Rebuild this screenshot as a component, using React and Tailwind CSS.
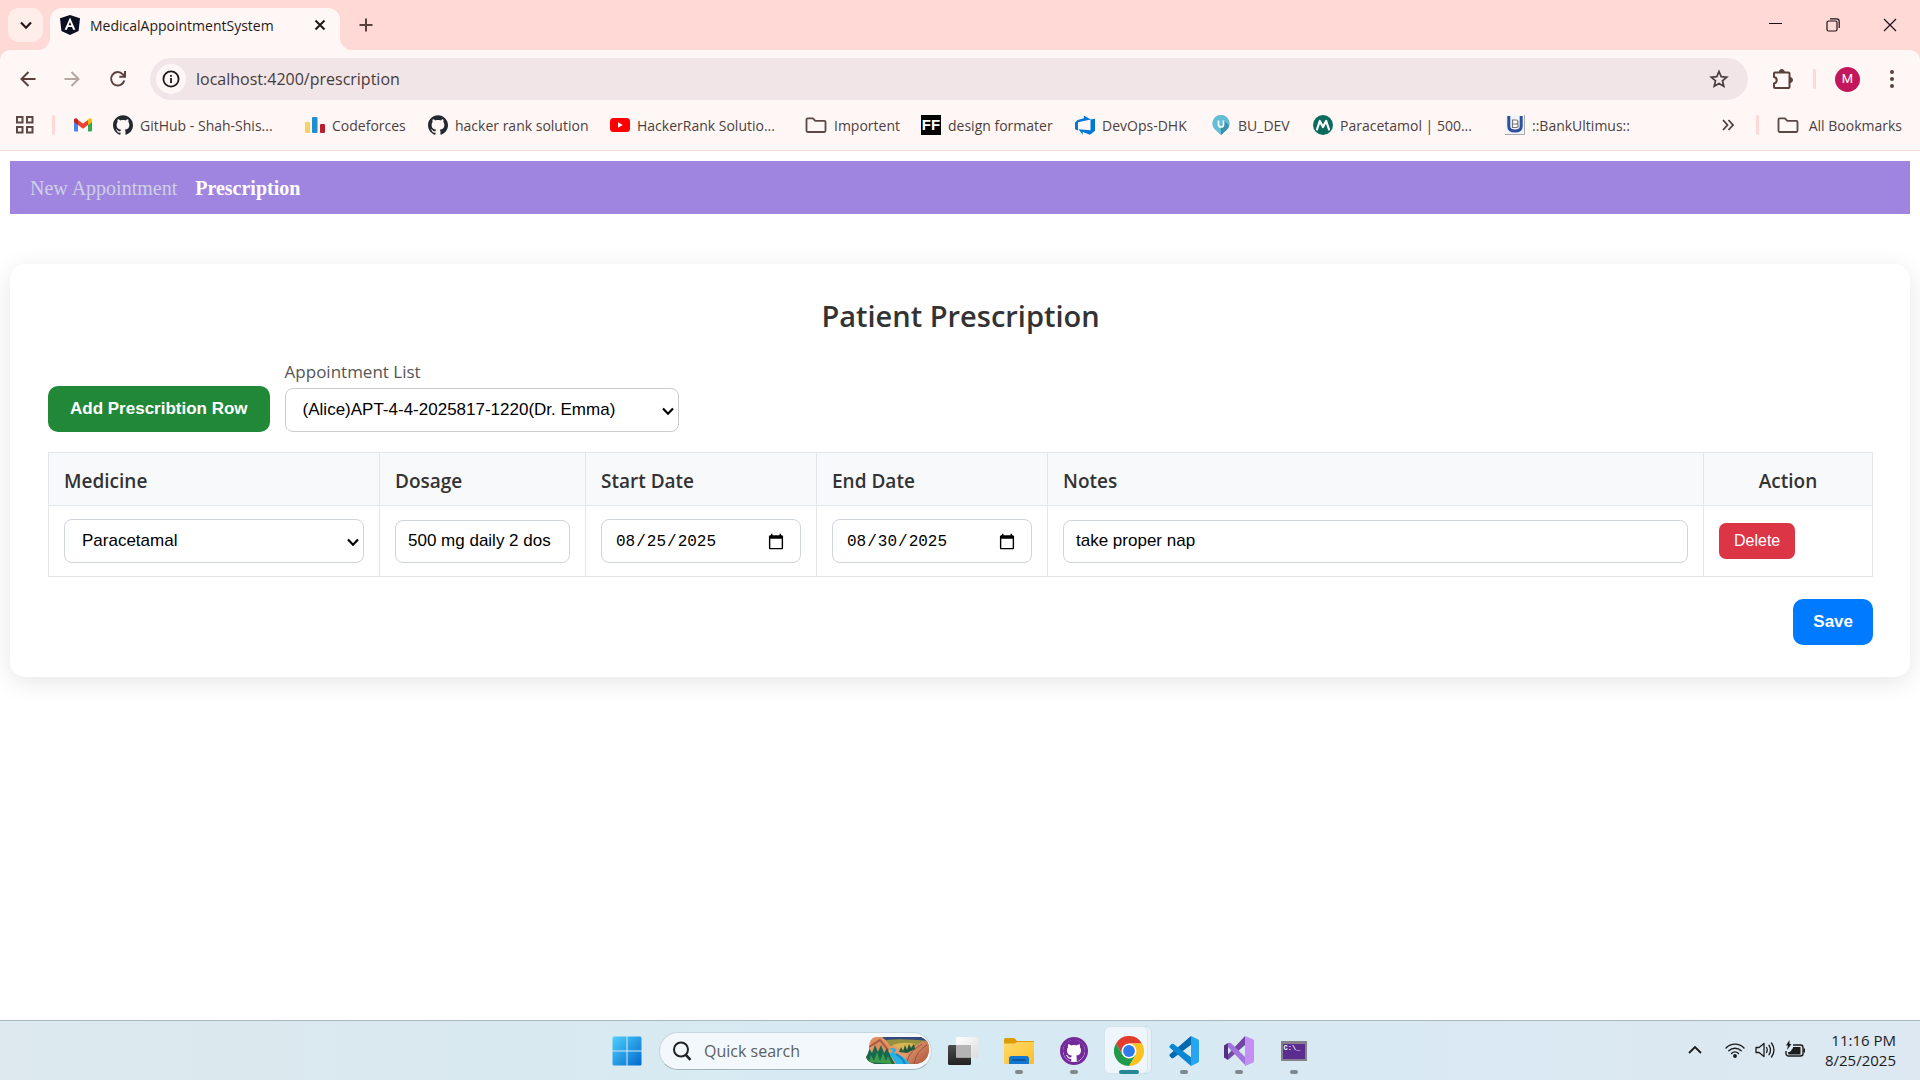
import React, { useState } from "react";
import { SiGithub } from "react-icons/si";

const UI = "font-['Open_Sans','Noto_Sans',sans-serif]";
const ARIAL = "font-['Liberation_Sans',sans-serif]";

/* ---------- icons ---------- */

function AngularIcon() {
  return (
    <svg width="20" height="20" viewBox="0 0 20 20" aria-hidden="true">
      <path d="M10 0 20 3.2 18.6 16 10 20 1.4 16 0 3.2z" fill="#0b1020" />
      <path d="M10 2.6 4.6 14.8h2.3l1.1-2.8h4l1.1 2.8h2.3zm0 4.3 1.4 3.4H8.6z" fill="#fff" fillRule="evenodd" />
    </svg>
  );
}

function GmailIcon() {
  return (
    <svg width="20" height="16" viewBox="0 0 20 16" aria-hidden="true">
      <path d="M1 4v9.500a1 1 0 0 0 1 1h3V7z" fill="#4285f4" />
      <path d="M19 4v9.500a1 1 0 0 1-1 1h-3V7z" fill="#34a853" />
      <path d="M15 3v5l4-3V3c0-1.600-2-2.300-3-1.500z" fill="#fbbc04" />
      <path d="M5 8V3L10 6.600 15 3v5l-5 3.800z" fill="#ea4335" />
      <path d="M1 3v2l4 3V3L4 1.500C3 .7 1 1.400 1 3z" fill="#c5221f" />
    </svg>
  );
}

function CodeforcesIcon() {
  return (
    <svg width="20" height="16" viewBox="0 0 20 16" aria-hidden="true">
      <rect x="0" y="5" width="5" height="11" rx="1" fill="#fad15c" />
      <rect x="7" y="0" width="5.500" height="16" rx="1" fill="#1f8fd0" />
      <rect x="15" y="7" width="5" height="9" rx="1" fill="#b9202c" />
    </svg>
  );
}

function GithubIcon() {
  return <SiGithub size={20} color="#24292f" aria-hidden="true" />;
}

function YoutubeIcon() {
  return (
    <svg width="20" height="20" viewBox="0 0 20 20" aria-hidden="true">
      <rect x="0" y="3" width="20" height="14" rx="3.500" fill="#ff0000" />
      <path d="M8 7.300v5.400L12.700 10z" fill="#fff" />
    </svg>
  );
}

function FolderIcon() {
  return (
    <svg width="22" height="18" viewBox="0 0 22 18" fill="none" stroke="#5b4744" strokeWidth="1.800" strokeLinejoin="round" aria-hidden="true">
      <path d="M1.500 3.500a1.200 1.200 0 0 1 1.200-1.200h5.200l2.400 2.500h9a1.200 1.200 0 0 1 1.200 1.200v8.800a1.200 1.200 0 0 1-1.200 1.200H2.700a1.200 1.200 0 0 1-1.200-1.200z" />
    </svg>
  );
}

function FormatterIcon() {
  return (
    <span className="flex h-5 w-5 items-center justify-center bg-black font-['Liberation_Sans',sans-serif] text-[15px] font-bold leading-5 text-white" aria-hidden="true">
      FF
    </span>
  );
}

function DevOpsIcon() {
  return (
    <svg width="20" height="20" viewBox="0 0 20 20" aria-hidden="true">
      <path d="M20 3.700v12l-5 4.100-7.300-2.700v2.700L3.400 14.300l12.100 1V4.600zM15.700 4.600 8.900.5v2.800L2.600 5.100 0 7.500v6.800l3 1.300V7.300z" fill="#0078d7" />
    </svg>
  );
}

function PinIcon() {
  return (
    <svg width="20" height="20" viewBox="0 0 20 20" aria-hidden="true">
      <path d="M10 0a8.500 8.500 0 0 1 5.800 14.800L10 20l-5.800-5.200A8.500 8.500 0 0 1 10 0z" fill="#62bdd6" />
      <path d="M13 5.500 18 10.500a8 8 0 0 1-2.200 4.300L10 20v-7z" fill="#3f8fb0" />
      <path d="M7.500 5.500v4a2.500 2.500 0 0 0 5 0v-4" fill="none" stroke="#fff" strokeWidth="1.700" />
    </svg>
  );
}

function MedexIcon() {
  return (
    <svg width="20" height="20" viewBox="0 0 20 20" aria-hidden="true">
      <circle cx="10" cy="10" r="10" fill="#0d6b5e" />
      <path d="M4 14.500 6.800 6l3.200 6 3.200-6 2.800 8.500" fill="none" stroke="#fff" strokeWidth="2.200" strokeLinejoin="round" strokeLinecap="round" />
    </svg>
  );
}

function BankIcon() {
  return (
    <svg width="20" height="20" viewBox="0 0 20 20" aria-hidden="true">
      <rect width="20" height="20" fill="#f3f4f8" />
      <path d="M19.500 0v19.500H0" fill="none" stroke="#a9a9ad" />
      <path d="M3.800 1v10.500q0 4.500 6.200 4.500t6.200-4.500V1" fill="none" stroke="#2c4f9e" strokeWidth="3" />
      <path d="M7.500 5h3.500a1.800 1.800 0 0 1 0 4H7.500zM7.500 9h4a1.700 1.700 0 0 1 0 3.500h-4z" fill="#fff" stroke="#77777c" strokeWidth="1.200" />
    </svg>
  );
}

function Caret({ className = "" }) {
  return (
    <svg width="12" height="12" viewBox="0 0 12 12" fill="none" stroke="currentColor" strokeWidth="2.200" className={className} aria-hidden="true">
      <path d="M1 3.500 6 8.700 11 3.500" />
    </svg>
  );
}

/* ---------- browser chrome ---------- */

function TabStrip() {
  return (
    <div className="flex h-[50px] items-end bg-[#ffd9d6]">
      <div className="flex h-[50px] w-[38px] items-center pl-2">
        <button aria-label="Search tabs" className="flex h-[34px] w-[35px] shrink-0 items-center justify-center rounded-[11px] bg-[#ffede9] text-[#1f1a19]">
          <Caret />
        </button>
      </div>
      <svg width="12" height="12" viewBox="0 0 12 12" className="shrink-0" aria-hidden="true">
        <path d="M12 0v12H0A12 12 0 0 0 12 0z" fill="#fff7f6" />
      </svg>
      <div className="flex h-[42px] w-[290px] items-center rounded-t-[12px] bg-[#fff7f6] pr-3 pb-2 pl-[10px]">
        <AngularIcon />
        <span className="ml-[10px] flex-1 whitespace-nowrap text-[14px] text-[#1f1a19]">MedicalAppointmentSystem</span>
        <button aria-label="Close tab" className="flex h-4 w-4 items-center justify-center">
          <svg width="12" height="12" viewBox="0 0 12 12" stroke="#1f1a19" strokeWidth="2" aria-hidden="true">
            <path d="m1.500 1.500 9 9m0-9-9 9" />
          </svg>
        </button>
      </div>
      <svg width="12" height="12" viewBox="0 0 12 12" className="shrink-0" aria-hidden="true">
        <path d="M0 0v12h12A12 12 0 0 1 0 0z" fill="#fff7f6" />
      </svg>
      <button aria-label="New tab" className="flex h-[50px] w-7 items-center justify-center">
        <svg width="14" height="14" viewBox="0 0 14 14" stroke="#5b403c" strokeWidth="2" aria-hidden="true">
          <path d="M7 .5v13M.5 7h13" />
        </svg>
      </button>
      <div className="ml-auto flex h-[50px] pr-[2px] text-[#1a1212]">
        <button aria-label="Minimize" className="flex w-[57px] items-center justify-center">
          <svg width="14" height="14" viewBox="0 0 14 14" stroke="currentColor" aria-hidden="true"><path d="M0 5.500h13" /></svg>
        </button>
        <button aria-label="Restore" className="flex w-[57px] items-center justify-center">
          <svg width="14" height="14" viewBox="0 0 14 14" fill="none" stroke="currentColor" strokeWidth="1.200" aria-hidden="true">
            <rect x="1" y="3" width="10" height="10" rx="1.500" />
            <path d="M4 .8h6.500a2.700 2.700 0 0 1 2.700 2.700V10" />
          </svg>
        </button>
        <button aria-label="Close" className="flex w-[57px] items-center justify-center">
          <svg width="14" height="14" viewBox="0 0 14 14" stroke="currentColor" strokeWidth="1.200" aria-hidden="true"><path d="m1 1 12 12m0-12L1 13" /></svg>
        </button>
      </div>
    </div>
  );
}

function Toolbar() {
  return (
    <div className="flex h-[58px] items-center pl-[18px] text-[#5b403c]">
      <button aria-label="Back" className="flex w-5 justify-center">
        <svg width="16" height="16" viewBox="0 0 16 16" fill="none" stroke="currentColor" strokeWidth="2" aria-hidden="true">
          <path d="M15.500 8H2m6.500-7L1.500 8l7 7" />
        </svg>
      </button>
      <button aria-label="Forward" className="ml-6 flex w-5 justify-center text-[#b5a6a4]">
        <svg width="16" height="16" viewBox="0 0 16 16" fill="none" stroke="currentColor" strokeWidth="2" aria-hidden="true">
          <path d="M.5 8H14M7.500 1l7 7-7 7" />
        </svg>
      </button>
      <button aria-label="Reload" className="ml-[26px] flex w-5 justify-center">
        <svg width="18" height="18" viewBox="0 0 18 18" fill="none" stroke="currentColor" strokeWidth="2" aria-hidden="true">
          <path d="M15.300 10.500A6.700 6.700 0 1 1 13.800 4.300L16 6.500" />
          <path d="M16 1v5.700h-5.700" />
        </svg>
      </button>
      <div className="ml-[22px] flex h-[42px] flex-1 items-center rounded-full bg-[#f1e5e7] pl-[6px] pr-[19px]">
        <button aria-label="Site information" className="flex h-[30px] w-[30px] items-center justify-center rounded-full bg-[#fff7f6]">
          <svg width="18" height="18" viewBox="0 0 18 18" fill="none" stroke="#1f1a19" strokeWidth="1.800" aria-hidden="true">
            <circle cx="9" cy="9" r="7.600" />
            <path d="M9 8v5M9 5v1.800" />
          </svg>
        </button>
        <input aria-label="Address" type="text" readOnly value="localhost:4200/prescription" className="ml-[10px] min-w-0 flex-1 bg-transparent text-[16px] text-[#453b3c] outline-none" />
        <button aria-label="Bookmark this page">
          <svg width="20" height="20" viewBox="0 0 20 20" fill="none" stroke="#4a3f40" strokeWidth="1.700" aria-hidden="true">
            <path d="m10 2.500 2.200 5.100 5.500.5-4.200 3.700 1.300 5.500L10 14.400l-4.800 2.900 1.300-5.500-4.200-3.700 5.500-.5z" />
          </svg>
        </button>
      </div>
      <button aria-label="Extensions" className="ml-[22px]">
        <svg width="24" height="24" viewBox="0 0 24 24" aria-hidden="true">
          <path d="M5 5.500h13.500a1 1 0 0 1 1 1v13.500a1 1 0 0 1-1 1H5a1 1 0 0 1-1-1v-3.500a3.300 3.300 0 0 0 0-6.500V6.500a1 1 0 0 1 1-1z" fill="none" stroke="currentColor" strokeWidth="2" strokeLinejoin="round" />
          <path d="M9.300 5a2.500 2.500 0 0 1 5 0zM20 10.500a2.500 2.500 0 0 1 0 5z" fill="currentColor" stroke="currentColor" />
        </svg>
      </button>
      <span className="ml-[19px] h-5 w-[3px] rounded-full bg-[#ffd9d6]" />
      <button aria-label="Profile" className="ml-[19px] flex h-[25px] w-[25px] items-center justify-center rounded-full bg-[#c2185b] font-[Roboto,sans-serif] text-[13px] text-white">
        M
      </button>
      <button aria-label="Menu" className="mr-[25px] ml-[29px]">
        <svg width="6" height="20" viewBox="0 0 6 20" fill="currentColor" aria-hidden="true">
          <circle cx="3" cy="3" r="2" /><circle cx="3" cy="10" r="2" /><circle cx="3" cy="17" r="2" />
        </svg>
      </button>
    </div>
  );
}

const bookmarks = [
  ["GitHub - Shah-Shis...", GithubIcon, "w-48"],
  ["Codeforces", CodeforcesIcon, "w-[123px]"],
  ["hacker rank solution", GithubIcon, "w-[182px]"],
  ["HackerRank Solutio...", YoutubeIcon, "w-[195px]"],
  ["Importent", FolderIcon, "w-[116px]"],
  ["design formater", FormatterIcon, "w-[154px]"],
  ["DevOps-DHK", DevOpsIcon, "w-[136px]"],
  ["BU_DEV", PinIcon, "w-[102px]"],
  ["Paracetamol | 500...", MedexIcon, "w-48"],
  ["::BankUltimus::", BankIcon, "w-[126px]"],
];

function BookmarksBar() {
  return (
    <nav aria-label="Bookmarks" className="flex h-[43px] items-center overflow-hidden border-b border-[#f8d9d6] pb-2 pl-[15px] text-[14px] text-[#4d3f3d]">
      <button aria-label="Apps">
        <svg width="20" height="20" viewBox="0 0 20 20" fill="none" stroke="#5b4744" strokeWidth="2" aria-hidden="true">
          <rect x="2" y="2" width="5.500" height="5.500" /><rect x="12" y="2" width="5.500" height="5.500" />
          <rect x="2" y="12" width="5.500" height="5.500" /><rect x="12" y="12" width="5.500" height="5.500" />
        </svg>
      </button>
      <span className="ml-[17px] h-5 w-[3px] rounded-full bg-[#ffd9d6]" />
      <a href="#gmail" aria-label="Gmail" className="ml-[18px] w-10"><GmailIcon /></a>
      {bookmarks.map(([label, Icon, width]) => (
        <a key={label} href="#bookmark" className={`flex shrink-0 items-center gap-[7px] whitespace-nowrap ${width}`}>
          <Icon />
          {label}
        </a>
      ))}
      <button aria-label="More bookmarks" className="ml-auto">
        <svg width="12" height="12" viewBox="0 0 12 12" fill="none" stroke="#4d3f3d" strokeWidth="1.800" aria-hidden="true">
          <path d="m1 1 4.500 5L1 11M6.500 1 11 6l-4.500 5" />
        </svg>
      </button>
      <span className="ml-[22px] h-5 w-[3px] rounded-full bg-[#ffd9d6]" />
      <a href="#all" className="mr-[18px] ml-[18px] flex items-center gap-[10px] whitespace-nowrap"><FolderIcon />All Bookmarks</a>
    </nav>
  );
}

/* ---------- page ---------- */

const field = "block w-full rounded-[8px] border bg-white text-black outline-none";

function SelectBox({ id, label, options, border }) {
  return (
    <div className="relative">
      <select id={id} aria-label={label} className={`${field} ${ARIAL} ${border} h-11 appearance-none pr-7 pl-[17px] text-[17px]`}>
        {options.map((o) => <option key={o}>{o}</option>)}
      </select>
      <Caret className="pointer-events-none absolute top-[17px] right-[5px]" />
    </div>
  );
}

function DateBox({ label, initial }) {
  const [v, setV] = useState(initial);
  return (
    <input type="date" aria-label={label} value={v} onChange={(e) => setV(e.target.value)}
      className={`${field} h-11 border-[#ced4da] px-[13px] pt-[2px] font-['Liberation_Mono',monospace] text-[16px] [&::-webkit-calendar-picker-indicator]:h-[18px] [&::-webkit-calendar-picker-indicator]:w-[18px]`} />
  );
}

function PrescriptionPage() {
  const [dosage, setDosage] = useState("500 mg daily 2 dos");
  const [notes, setNotes] = useState("take proper nap");
  const cell = "border border-[#e3e6ea] px-[15px]";
  const input = `${field} ${ARIAL} h-[43px] border-[#ced4da] px-3 text-[17px]`;
  return (
    <main className="flex-1 bg-white p-[10px]">
      <nav className="flex h-[53px] items-center gap-[18px] bg-[#a085e0] px-5 font-['Liberation_Serif',serif] text-[20px]">
        <a href="#new" className="text-[#cdd0e6]">New Appointment</a>
        <a href="#prescription" className="font-bold text-white">Prescription</a>
      </nav>
      <section className="mt-[50px] rounded-[15px] bg-white py-8 pr-[37px] pl-[38px] shadow-[0_5px_25px_rgba(0,0,0,0.1)]">
        <h2 className="mb-6 text-center text-[29px] font-semibold leading-10 text-[#333]">Patient Prescription</h2>
        <div className="mb-5 flex items-end gap-[15px]">
          <button className={`${ARIAL} h-[46px] rounded-[10px] bg-[#218838] px-[22px] text-[17px] font-bold text-white`}>Add Prescribtion Row</button>
          <div className="w-[394px]">
            <label htmlFor="appointment" className="mb-1 block text-[17px] leading-6 text-[#555]">Appointment List</label>
            <SelectBox id="appointment" options={["(Alice)APT-4-4-2025817-1220(Dr. Emma)"]} border="border-[#ccc]" />
          </div>
        </div>
        <table className="w-full table-fixed border-collapse">
          <colgroup>
            <col className="w-[331px]" /><col className="w-[206px]" /><col className="w-[231px]" />
            <col className="w-[231px]" /><col /><col className="w-[169px]" />
          </colgroup>
          <thead>
            <tr className="h-[53px] bg-[#f8f9fb] text-left text-[19px] leading-6 text-[#333]">
              {["Medicine", "Dosage", "Start Date", "End Date", "Notes"].map((h) => (
                <th key={h} className={`${cell} pt-1 font-semibold`}>{h}</th>
              ))}
              <th className={`${cell} pt-1 text-center font-semibold`}>Action</th>
            </tr>
          </thead>
          <tbody>
            <tr className="h-[71px]">
              <td className={cell}><SelectBox id="medicine" label="Medicine" options={["Paracetamal"]} border="border-[#ced4da]" /></td>
              <td className={cell}>
                <input type="text" aria-label="Dosage" value={dosage} onChange={(e) => setDosage(e.target.value)} className={input} />
              </td>
              <td className={cell}><DateBox label="Start Date" initial="2025-08-25" /></td>
              <td className={cell}><DateBox label="End Date" initial="2025-08-30" /></td>
              <td className={cell}>
                <input type="text" aria-label="Notes" value={notes} onChange={(e) => setNotes(e.target.value)} className={input} />
              </td>
              <td className={cell}>
                <button className={`${ARIAL} block h-9 rounded-[7px] bg-[#dc3545] px-[15px] text-[16px] text-white`}>Delete</button>
              </td>
            </tr>
          </tbody>
        </table>
        <div className="mt-[22px] flex justify-end">
          <button className={`${ARIAL} h-[46px] rounded-[10px] bg-[#007bff] px-5 text-[17px] font-bold text-white`}>Save</button>
        </div>
      </section>
    </main>
  );
}

/* ---------- taskbar ---------- */

function StartIcon() {
  return (
    <svg width="30" height="30" viewBox="0 0 30 30" aria-hidden="true">
      <defs><linearGradient id="win" x1="0" y1="0" x2="1" y2="1"><stop offset="0" stopColor="#4fd0fb" /><stop offset="1" stopColor="#0069cf" /></linearGradient></defs>
      <path d="M2 .5h12.500v14H.5V2A1.500 1.500 0 0 1 2 .5zM15.500.5H28A1.500 1.500 0 0 1 29.500 2v12.500h-14zM.5 15.500h14v14H2A1.500 1.500 0 0 1 .5 28zM15.500 15.500h14V28a1.500 1.500 0 0 1-1.500 1.500H15.500z" fill="url(#win)" />
    </svg>
  );
}

function Landscape() {
  return (
    <svg width="63" height="27" viewBox="0 0 63 27" aria-hidden="true">
      <defs>
        <clipPath id="land"><path d="M9 0h46q8 3 8 12 0 12-12 15H9Q1 25 0 20q4-6 3-11Q4 2 9 0z" /></clipPath>
        <linearGradient id="sand" x1="0" y1="0" x2="1" y2="1"><stop offset="0" stopColor="#f2b27c" /><stop offset="1" stopColor="#a94f39" /></linearGradient>
      </defs>
      <g clipPath="url(#land)">
        <rect width="63" height="27" fill="#e39a68" />
        <path d="M16 0h47v5H22z" fill="#334a7c" />
        <path d="M20 3q16-2 43 1v5H24z" fill="#96913f" />
        <path d="M26 8q12-4 24-1l-14 6z" fill="#d8b454" />
        <path d="M0 2 14 0l12 12-12 5z" fill="#dd8e5e" />
        <path d="M3 10 14 3l8 10" fill="none" stroke="#a65a43" strokeWidth="2" />
        <path d="M63 3q-12 2-20 11l-6 13h26z" fill="url(#sand)" />
        <path d="M61 8q-11 6-13 19M56 7q-12 7-15 17" fill="none" stroke="#8c4338" strokeWidth="1" opacity=".7" />
        <path d="M24 11q10 0 4 5 9 2 16 11H30q-3-7-8-10 8-2 2-6z" fill="#25b3e6" />
        <path d="M30 17q7 4 9 10" fill="none" stroke="#1583c4" strokeWidth="2" />
        <path d="m0 19 3-8 3 5 3-8 3 7 3-7 3 8 3-5 4 9 4 7H0z" fill="#16684e" />
        <path d="m3 25 2-7 3 6 3-9 3 9 3-8 3 8 2-5 4 8z" fill="#3e9c4c" />
        <path d="m33 15 2-5 2 4 2-6 2 5 2-6 2 4 3-4 1 5-8 4z" fill="#1b5a3d" />
      </g>
    </svg>
  );
}

function TaskViewIcon() {
  return (
    <svg width="31" height="30" viewBox="0 0 31 30" aria-hidden="true">
      <defs>
        <linearGradient id="tvd" x1="0" y1="0" x2="0" y2="1"><stop offset="0" stopColor="#4c4c4c" /><stop offset="1" stopColor="#222" /></linearGradient>
        <linearGradient id="tvl" x1="0" y1="0" x2="1" y2="1"><stop offset="0" stopColor="#fff" /><stop offset="1" stopColor="#dcdcdc" /></linearGradient>
      </defs>
      <rect x="0" y="9" width="23" height="20" rx="1.500" fill="url(#tvd)" />
      <rect x="8" y="1" width="22.500" height="20.500" rx="1.500" fill="url(#tvl)" />
      <path d="M8 9h15v12.500H8z" fill="#b4b4b4" />
    </svg>
  );
}

function ExplorerIcon() {
  return (
    <svg width="30" height="30" viewBox="0 0 30 30" aria-hidden="true">
      <defs><linearGradient id="fold" x1="0" y1="0" x2="1" y2="1"><stop offset="0" stopColor="#ffdc6a" /><stop offset="1" stopColor="#fdbd29" /></linearGradient></defs>
      <path d="M0 3.500A1.500 1.500 0 0 1 1.500 2h8.700L13 5h17v8H0z" fill="#dd9c06" />
      <path d="M0 7.500h10.500L13.500 6H30v20.500a1.500 1.500 0 0 1-1.500 1.500h-27A1.500 1.500 0 0 1 0 26.500z" fill="url(#fold)" />
      <path d="M5 28v-5.500A2.500 2.500 0 0 1 7.500 20h15a2.500 2.500 0 0 1 2.500 2.500V28z" fill="#1277cf" />
      <path d="M8.500 24h13" stroke="#0a4b91" strokeWidth="1.500" />
    </svg>
  );
}

function GithubDesktopIcon() {
  return (
    <span className="flex h-7 w-7 items-center justify-center rounded-full border-[3px] border-[#752a9b] bg-white">
      <SiGithub size={23} color="#752a9b" aria-hidden="true" className="rounded-full" />
    </span>
  );
}

function ChromeIcon() {
  return (
    <svg width="30" height="30" viewBox="0 0 30 30" aria-hidden="true">
      <path d="M2 7.500A15 15 0 0 1 28 7.500H15L8.500 18.750z" fill="#e33b2e" />
      <path d="M28 7.500A15 15 0 0 1 15 30L21.500 18.750 15 7.500z" fill="#fcc31e" />
      <path d="M15 30A15 15 0 0 1 2 7.500l6.500 11.250h13z" fill="#219b4b" />
      <circle cx="15" cy="15" r="7.500" fill="#fff" />
      <circle cx="15" cy="15" r="5.900" fill="#2f7bec" />
    </svg>
  );
}

function CodeIcon() {
  return (
    <svg width="30" height="30" viewBox="0 0 30 30" aria-hidden="true">
      <path d="M22 0 .8 18.300a1.500 1.500 0 0 0 0 2l1.700 1.600a1.500 1.500 0 0 0 2 0L23 8z" fill="#0068ad" />
      <path d="M22 30 .8 11.700a1.500 1.500 0 0 1 0-2l1.700-1.600a1.500 1.500 0 0 1 2 0L23 22z" fill="#0a86d3" />
      <path d="M22 0 28.800 3.200A2 2 0 0 1 30 5v20a2 2 0 0 1-1.200 1.800L22 30z" fill="#27a5f0" />
    </svg>
  );
}

function VisualStudioIcon() {
  return (
    <svg width="30" height="30" viewBox="0 0 30 30" aria-hidden="true">
      <path d="M4.500 23.500 1 21.500 21 0v9z" fill="#7047a3" />
      <path d="M0 9.500 4 7v17L0 21.500z" fill="#553080" />
      <path d="M4 7q2-1 4 1l14 14v8L4 11z" fill="#a273dc" />
      <path d="M21 0 28.800 3.200A2 2 0 0 1 30 5v20a2 2 0 0 1-1.200 1.800L21 30z" fill="#c38ff5" />
    </svg>
  );
}

function TerminalIcon() {
  return (
    <span className="block h-5 w-[26px] border-2 border-t-[3px] border-[#85808c] bg-[#5c2d91] pl-px text-left font-['Liberation_Mono',monospace] text-[7px] font-bold leading-[9px] text-white" aria-hidden="true">
      C:\_
    </span>
  );
}

function Tile({ label, indicator = "dot", children }) {
  return (
    <button aria-label={label} className="relative flex h-[59px] w-[55px] items-center justify-center">
      {indicator === "active" && <span className="absolute top-[5px] left-[3px] h-12 w-12 rounded-[6px] border border-[#c9dfe9] bg-[#e6f1f8]" />}
      {indicator === "active" && <span className="absolute top-[5px] left-[3px] h-12 w-11 rounded-[6px] border border-[#d5e5ee] bg-[#eef5fb]" />}
      <span className="relative">{children}</span>
      {indicator === "active" && <span className="absolute bottom-[6px] h-1 w-5 rounded-full bg-[#258698]" />}
      {indicator === "dot" && <span className="absolute bottom-[6px] h-1 w-2 rounded-full bg-[#7f888d]" />}
    </button>
  );
}

function Taskbar() {
  return (
    <footer className="grid h-[60px] grid-cols-[1fr_auto_1fr] items-center border-t border-[#a9b6bd] bg-linear-to-r from-[#dde9ee] via-[#d6eaf3] to-[#dde8f2]">
      <div />
      <div className="flex items-center">
        <Tile label="Start" indicator="none"><StartIcon /></Tile>
        <div className="mr-1 ml-[5px] flex h-[38px] w-[273px] items-center rounded-full border border-[#c3d5de] border-b-[#9fb1ba] bg-[#f3f8fc] pr-[2px] pl-3">
          <svg width="20" height="20" viewBox="0 0 20 20" fill="none" stroke="#222" strokeWidth="2" aria-hidden="true">
            <circle cx="9" cy="8.500" r="7" /><path d="m13.800 13.800 4.700 5" strokeWidth="2.600" />
          </svg>
          <input aria-label="Quick search" type="search" placeholder="Quick search" className="ml-3 h-8 w-40 bg-transparent text-[16px] outline-none placeholder:text-[#5c5f61]" />
          <span className="ml-auto"><Landscape /></span>
        </div>
        <Tile label="Task view" indicator="none"><TaskViewIcon /></Tile>
        <Tile label="File Explorer"><ExplorerIcon /></Tile>
        <Tile label="GitHub Desktop"><GithubDesktopIcon /></Tile>
        <Tile label="Chrome" indicator="active"><ChromeIcon /></Tile>
        <Tile label="Visual Studio Code"><CodeIcon /></Tile>
        <Tile label="Visual Studio"><VisualStudioIcon /></Tile>
        <Tile label="Terminal"><TerminalIcon /></Tile>
      </div>
      <div className="flex items-center justify-end pr-6 pb-[2px] text-[#1b1b1b]">
        <button aria-label="Show hidden icons">
          <svg width="14" height="14" viewBox="0 0 14 14" fill="none" stroke="currentColor" strokeWidth="1.800" aria-hidden="true"><path d="m1 10 6-6 6 6" /></svg>
        </button>
        <div className="ml-[23px] flex gap-[10px]">
          <svg width="20" height="20" viewBox="0 0 20 20" fill="none" stroke="currentColor" strokeWidth="1.400" strokeLinecap="round" aria-hidden="true">
            <path d="M1 8a12.500 12.500 0 0 1 18 0M3.800 10.800a8.800 8.800 0 0 1 12.400 0M6.500 13.400a5 5 0 0 1 7 0" />
            <circle cx="10" cy="16" r="1.200" fill="currentColor" />
          </svg>
          <svg width="20" height="20" viewBox="0 0 20 20" fill="none" stroke="currentColor" strokeWidth="1.300" strokeLinejoin="round" strokeLinecap="round" aria-hidden="true">
            <path d="M1 7.500v5h3l5 4v-13l-5 4zM11.500 7.500q1.500 2.500 0 5M14 5.300q3 4.700 0 9.400M16.500 3q5 7 0 14" />
          </svg>
          <svg width="20" height="20" viewBox="0 0 20 20" aria-hidden="true">
            <path d="M8 5h7.500A2.500 2.500 0 0 1 18 7.500v6a2.500 2.500 0 0 1-2.500 2.500h-12A2.500 2.500 0 0 1 1 13.500V11" fill="none" stroke="currentColor" strokeWidth="1.400" />
            <path d="M8 7h7.500v7.500h-12L3 12h2l3-4zM18.500 8.500H20v4h-1.500zM4.500 0 1 5.500h2L2 10l4.500-6h-2z" fill="currentColor" />
          </svg>
        </div>
        <div className="ml-5 text-right text-[15px] leading-5"><div>11:16 PM</div><div>8/25/2025</div></div>
      </div>
    </footer>
  );
}

export default function App() {
  return (
    <div className={`flex min-h-screen flex-col bg-white ${UI}`}>
      <header className="bg-[#ffd9d6]">
        <TabStrip />
        <div className="rounded-t-[10px] bg-[#fff7f6]">
          <Toolbar />
          <BookmarksBar />
        </div>
      </header>
      <PrescriptionPage />
      <Taskbar />
    </div>
  );
}
